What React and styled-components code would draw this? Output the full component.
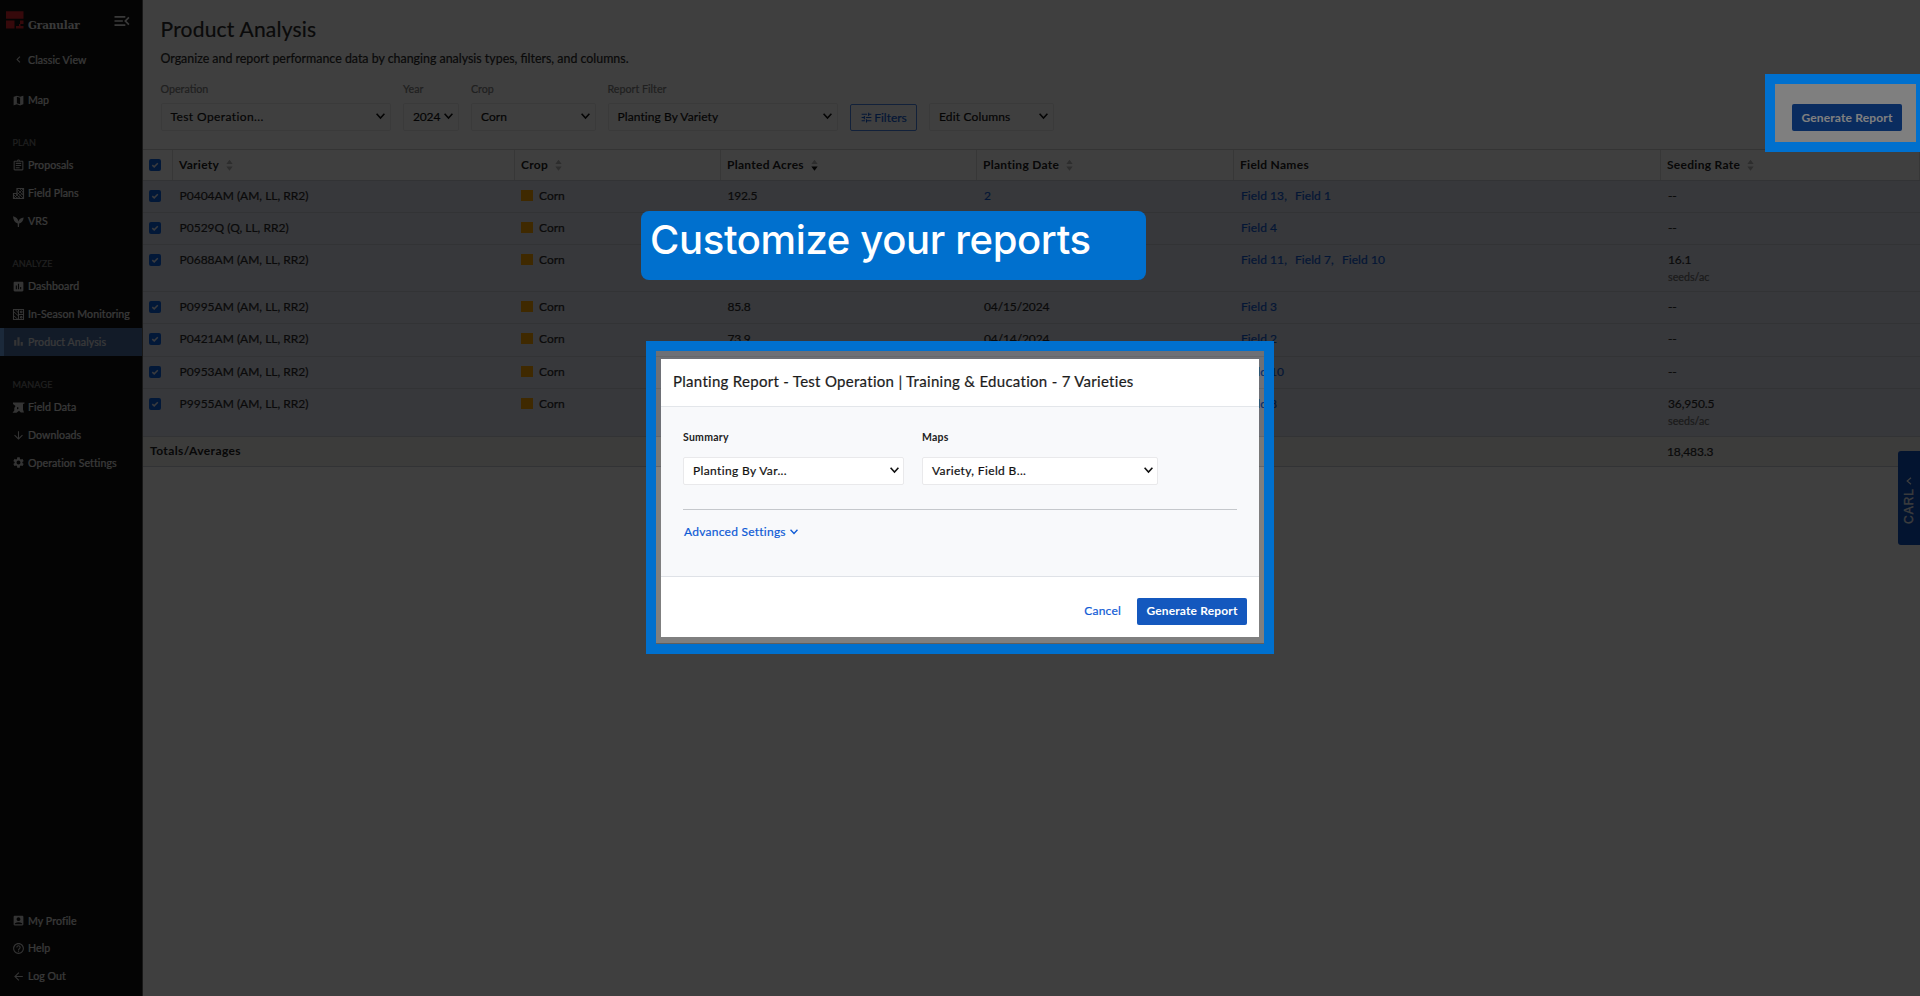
import React from 'react';
import styled, { createGlobalStyle, css } from 'styled-components';
import {
  MdMap, MdOutlineAssignment, MdPoll, MdBarChart, MdArrowDownward, MdSettings,
  MdAccountBox, MdHelpOutline, MdArrowBack, MdMenuOpen, MdChevronLeft, MdTune,
} from 'react-icons/md';

const Global = createGlobalStyle`
  * { box-sizing: border-box; }
  body { margin: 0; background: #fff; font-family: Lato, sans-serif; font-size: 12px; color: #2a2a2a; overflow: hidden; -webkit-text-stroke: 0.2px; }
`;

const Shell = styled.div`
  position: relative;
  display: flex;
  width: 1920px;
  height: 996px;
  overflow: hidden;
`;

/* ---------- sidebar ---------- */
const Sidebar = styled.nav`
  flex: none;
  display: flex;
  flex-direction: column;
  width: 143px;
  padding-bottom: 6px;
  background: #101010;
  border-right: 1px solid #606060;
  color: #e6e6e6;
`;
const Brand = styled.div`
  display: flex;
  align-items: flex-start;
  height: 46px;
  padding: 11px 10px 0 6px;
`;
const BrandName = styled.span`
  flex: 1;
  margin: 6.5px 0 0 4px;
  font: bold 11.6px/14px 'DejaVu Serif Condensed', 'DejaVu Serif', serif;
  letter-spacing: -0.1px;
  -webkit-text-stroke: 0;
`;
const GroupLabel = styled.div`
  height: 12px;
  margin: ${(p) => p.$top}px 0 ${(p) => p.$bottom}px 12.5px;
  font-size: 9.1px;
  line-height: 12px;
  letter-spacing: 0.1px;
  color: #808080;
`;
const NavItem = styled.a`
  display: flex;
  align-items: center;
  gap: 3px;
  flex: none;
  height: 27.8px;
  margin-top: ${(p) => p.$top || 0}px;
  padding-left: 12px;
  font-size: 10.6px;
  letter-spacing: 0.08px;
  white-space: nowrap;
  svg { flex: none; width: 13px; height: 13px; color: #d0d0d0; }
  ${(p) => p.$active && css`
    background: #4a6ca2;
    box-shadow: inset 4px 0 #6ea6e8;
  `}
`;
const Spacer = styled.div`
  flex: 1;
`;

/* ---------- page head ---------- */
const Main = styled.main`
  flex: 1;
  min-width: 0;
  display: flex;
  flex-direction: column;
`;
const Head = styled.header`
  height: 149px;
  padding: 15px 18px 0 17.5px;
`;
const Title = styled.h1`
  margin: 0;
  font-size: 21px;
  line-height: 28px;
  font-weight: 400;
  letter-spacing: 0.22px;
`;
const Subtitle = styled.p`
  margin: 7.5px 0 0;
  font-size: 12.4px;
  line-height: 16px;
`;
const Toolbar = styled.div`
  display: flex;
  align-items: flex-end;
  height: 50px;
  margin-top: 14.5px;
`;
const Field = styled.div`
  width: ${(p) => p.$w}px;
  margin-right: ${(p) => p.$gap}px;
`;
const FieldLabel = styled.div`
  margin-bottom: 7px;
  font-size: 10.7px;
  line-height: 14px;
  color: #808080;
`;
const SelectBox = styled.div`
  display: flex;
  align-items: center;
  justify-content: space-between;
  height: 28px;
  padding: 0 4.5px 1px 9px;
  background: #fff;
  border: 1px solid #e9e9eb;
  border-radius: 2px;
  color: #111;
  letter-spacing: ${(p) => p.$ls || 0.08}px;
  white-space: nowrap;
`;
const FilterButton = styled.button`
  display: flex;
  align-items: center;
  justify-content: center;
  gap: 1px;
  width: 67px;
  height: 27px;
  margin-right: 12px;
  padding: 0;
  background: #fff;
  border: 1px solid #4a86e8;
  border-radius: 2px;
  font: 12px Lato, sans-serif;
  color: #0f5bd6;
`;
const PrimaryButton = styled.button`
  width: 110px;
  height: 27px;
  padding: 0 0 1px;
  background: #1458be;
  border: 0;
  border-radius: 2px;
  font: 700 12px Lato, sans-serif;
  letter-spacing: 0.16px;
  color: #fff;
  -webkit-text-stroke: 0;
`;

/* ---------- table ---------- */
const Grid = styled.div`
  border-top: 1px solid #d2d2d2;
`;
const Row = styled.div`
  display: grid;
  grid-template-columns: 30px 342px 206px 256px 257px 427px 259px;
  height: ${(p) => p.$h}px;
  background: ${(p) => p.$bg};
  border-bottom: 1px solid #cbced4;
`;
const HeadCell = styled.div`
  display: flex;
  align-items: center;
  gap: 7px;
  padding: 0 0 1px 6px;
  border-right: 1px solid #dcdcdc;
  font-weight: 700;
  letter-spacing: 0.28px;
  color: #222;
  -webkit-text-stroke: 0;
`;
const Cell = styled.div`
  padding-left: ${(p) => p.$pl || 7}px;
  line-height: 29px;
  letter-spacing: ${(p) => p.$ls || 0}px;
  white-space: nowrap;
`;
const Crop = styled(Cell)`
  display: flex;
  align-items: center;
  gap: 6px;
  height: 29px;
  padding-left: 6px;
  &::before { content: ''; width: 12px; height: 11px; background: #ffa400; }
`;
const Links = styled(Cell)`
  display: flex;
  gap: 8px;
  line-height: 30px;
  letter-spacing: 0.08px;
  color: #0f5bd6;
`;
const Unit = styled.div`
  margin-top: -4px;
  font-size: 10.7px;
  line-height: 14px;
  letter-spacing: 0;
  color: #6c6c6c;
`;
const CheckCell = styled.div`
  padding: ${(p) => p.$pt}px 0 0 6px;
  border-right: ${(p) => (p.$line ? '1px solid #dcdcdc' : '0')};
  line-height: 0;
`;
const TotalLabel = styled.div`
  grid-column: 1 / 7;
  padding-left: 7px;
  line-height: 28px;
  font-weight: 700;
  letter-spacing: 0.4px;
  color: #222;
  -webkit-text-stroke: 0;
`;

/* ---------- overlays ---------- */
const Carl = styled.aside`
  position: absolute;
  right: 0;
  top: 451px;
  width: 22.5px;
  height: 94px;
  display: flex;
  flex-direction: column;
  align-items: center;
  padding-top: 26px;
  background: #0c50c0;
  border-radius: 3px 0 0 3px;
  color: #f4f4f4;
`;
const CarlText = styled.span`
  margin-top: 3px;
  writing-mode: vertical-rl;
  transform: rotate(180deg);
  font: 12px/16px 'Liberation Sans', sans-serif;
  letter-spacing: 1px;
  -webkit-text-stroke: 0.3px;
`;
const Scrim = styled.div`
  position: absolute;
  inset: 0;
  background: rgba(0, 0, 0, 0.5);
`;
const Spotlight = styled(Scrim)`
  clip-path: polygon(evenodd,
    0 0, 1920px 0, 1920px 996px, 0 996px, 0 0,
    656px 351px, 1264px 351px, 1264px 643.5px, 656px 643.5px, 656px 351px, 0 0,
    1774px 84px, 1916px 84px, 1916px 142px, 1774px 142px, 1774px 84px, 0 0);
`;
const Frame = styled.div`
  position: absolute;
  border: 10px solid #0070ce;
`;
const ActionFrame = styled(Frame)`
  left: 1764.5px;
  top: 74px;
  width: 161px;
  height: 78px;
`;
const ModalFrame = styled(Frame)`
  left: 646px;
  top: 341px;
  width: 628px;
  height: 313px;
  padding: 8px 5px 6px;
`;
const Callout = styled.div`
  position: absolute;
  left: 641px;
  top: 210.5px;
  width: 505px;
  height: 69px;
  padding: 4px 0 0 9px;
  background: #0070ce;
  border-radius: 8px;
  font: 500 40px/50px Inter, sans-serif;
  letter-spacing: -0.35px;
  color: #fff;
  white-space: nowrap;
  -webkit-text-stroke: 0;
`;
const Dialog = styled.section`
  display: flex;
  flex-direction: column;
  height: 278px;
  background: #fff;
`;
const DialogHead = styled.div`
  height: 48px;
  padding: 0 12px;
  border-bottom: 1px solid #e3e6ea;
  font-size: 15px;
  line-height: 45px;
  letter-spacing: 0.29px;
  color: #1c1c1c;
  white-space: nowrap;
`;
const DialogBody = styled.div`
  flex: 1;
  padding: 23px 22px 0;
  background: #f8f9fb;
`;
const DialogFields = styled.div`
  display: flex;
  height: 80px;
  border-bottom: 1px solid #c5c8cc;
`;
const DialogLabel = styled.div`
  margin-bottom: 13px;
  font-size: 10.5px;
  line-height: 14px;
  font-weight: 700;
  letter-spacing: 0.25px;
  color: #222;
  -webkit-text-stroke: 0;
`;
const Advanced = styled.div`
  display: flex;
  align-items: center;
  gap: 4px;
  margin: 14px 0 0 1px;
  line-height: 16px;
  letter-spacing: 0.25px;
  color: #0f5bd6;
`;
const DialogFoot = styled.div`
  display: flex;
  align-items: center;
  justify-content: flex-end;
  gap: 16px;
  height: 61px;
  padding: 8px 12px 0 0;
  border-top: 1px solid #dfe2e7;
`;
const Cancel = styled.span`
  padding-bottom: 1px;
  letter-spacing: 0.2px;
  color: #0f5bd6;
`;

/* ---------- drawings ---------- */
const Chevron = ({ w = 9, sw = 1.6 }) => (
  <svg width={w} height={w * 0.67} viewBox="0 0 9 6" fill="none" stroke="currentColor" strokeWidth={sw}>
    <path d="M.6 .8 4.5 5 8.4 .8" />
  </svg>
);
const Sort = ({ desc }) => (
  <svg width="7" height="12" viewBox="0 0 7 12">
    <path d="M.3 5 3.5 .8 6.7 5z" fill="#b4b4b4" />
    <path d="M.3 7.5 3.5 11.8 6.7 7.5z" fill={desc ? '#111' : '#b4b4b4'} />
  </svg>
);
const Check = () => (
  <svg width="12" height="12" viewBox="0 0 12 12">
    <rect width="12" height="12" rx="2" fill="#0a60e0" />
    <path d="M3.3 6.1 5.2 7.9 8.8 4.3" fill="none" stroke="#e8eef8" strokeWidth="1.5" />
  </svg>
);
const Logo = () => (
  <svg width="18" height="18" viewBox="0 0 18 18" fill="#d8242e">
    <path d="M0 .3h17.5v7.5H0zM0 9.5h8.5v8H0zM14 9.5h3.5V13H14zM10 15h7.5v2.5H10zM13 13h1.5v2.5H13z" />
  </svg>
);
const FieldPlansIcon = () => (
  <svg viewBox="0 0 13 13" fill="none" stroke="currentColor">
    <path d="M1.5 6.5H5V1.5h6.5v10h-10z" strokeWidth="1.2" />
    <path d="M2 8l3.5 3.5M4 7l4.5 4.5M5.5 5.5l5.5 5.5M5.5 2.5l5.5 5.5M8 2l3 3M2 11l9-9M5 11.500l6.500-6.500" strokeWidth=".8" />
  </svg>
);
const SproutIcon = () => (
  <svg viewBox="0 0 13 13" fill="currentColor">
    <path d="M1 1.2c3 .6 5 2.300 5.300 5.300C6.900 4.300 9 2.700 11.700 2.500 11.300 5.800 9.800 7.800 7.200 8.400L7 12H5.800L5.700 8.400C2.600 7.500 1.300 5 1 1.200z" />
  </svg>
);
const SeasonIcon = () => (
  <svg viewBox="0 0 13 13" fill="none" stroke="currentColor">
    <path d="M1.500 1.500h10v10h-10zM6.500 1v11M7 6.500h5" strokeWidth="1.100" />
    <path d="M2 4l4 3.500M2 8l4 3.500M3.500 2l3 3" strokeWidth=".9" />
    <path d="M8.500 3.200h1.500v1.500H8.500zM8.500 8.500h1.500V10H8.500z" />
  </svg>
);
const FieldDataIcon = () => (
  <svg viewBox="0 0 13 13" fill="currentColor">
    <path d="M1 1.500h11.500v1L11 3v5.500l1 3H8.800L7 9.800 4.500 11.800H.5l1.800-2.300V7L3.500 5 1 3zM5 6v2.500L7 7z" fillRule="evenodd" />
  </svg>
);

const PLAN = [['Proposals', MdOutlineAssignment], ['Field Plans', FieldPlansIcon], ['VRS', SproutIcon]];
const ANALYZE = [['Dashboard', MdPoll], ['In-Season Monitoring', SeasonIcon], ['Product Analysis', MdBarChart]];
const MANAGE = [['Field Data', FieldDataIcon], ['Downloads', MdArrowDownward], ['Operation Settings', MdSettings]];
const ACCOUNT = [['My Profile', MdAccountBox], ['Help', MdHelpOutline], ['Log Out', MdArrowBack]];

const VARIETIES = [
  { h: 32, name: 'P0404AM (AM, LL, RR2)', acres: '192.5', dates: '2', fields: ['Field 13,', 'Field 1'], rate: '--' },
  { h: 32, name: 'P0529Q (Q, LL, RR2)', fields: ['Field 4'], rate: '--' },
  { h: 47, name: 'P0688AM (AM, LL, RR2)', fields: ['Field 11,', 'Field 7,', 'Field 10'], rate: '16.1', unit: true },
  { h: 32, name: 'P0995AM (AM, LL, RR2)', acres: '85.8', date: '04/15/2024', fields: ['Field 3'], rate: '--' },
  { h: 33, name: 'P0421AM (AM, LL, RR2)', acres: '73.9', date: '04/14/2024', fields: ['Field 2'], rate: '--' },
  { h: 32, name: 'P0953AM (AM, LL, RR2)', fields: ['Field 10'], rate: '--' },
  { h: 48, name: 'P9955AM (AM, LL, RR2)', fields: ['Field 8'], rate: '36,950.5', unit: true },
];

const NavGroup = ({ items, active }) => items.map(([label, Icon]) => (
  <NavItem key={label} $active={label === active}><Icon />{label}</NavItem>
));

const Select = ({ children, ...rest }) => (
  <SelectBox {...rest}>{children}<Chevron /></SelectBox>
);

export default function App() {
  return (
    <Shell>
      <Global />
      <Sidebar>
        <Brand>
          <Logo />
          <BrandName>Granular</BrandName>
          <MdMenuOpen size={20} />
        </Brand>
        <NavItem><MdChevronLeft />Classic View</NavItem>
        <NavItem $top={12.5}><MdMap />Map</NavItem>
        <GroupLabel $top={23} $bottom={2.5}>PLAN</GroupLabel>
        <NavGroup items={PLAN} />
        <GroupLabel $top={23} $bottom={2.5}>ANALYZE</GroupLabel>
        <NavGroup items={ANALYZE} active="Product Analysis" />
        <GroupLabel $top={23} $bottom={2.5}>MANAGE</GroupLabel>
        <NavGroup items={MANAGE} />
        <Spacer />
        <NavGroup items={ACCOUNT} />
      </Sidebar>

      <Main>
        <Head>
          <Title>Product Analysis</Title>
          <Subtitle>Organize and report performance data by changing analysis types, filters, and columns.</Subtitle>
          <Toolbar>
            <Field $w={230} $gap={12.5}>
              <FieldLabel>Operation</FieldLabel>
              <Select $ls={0.4}>Test Operation...</Select>
            </Field>
            <Field $w={55.5} $gap={12.5}>
              <FieldLabel>Year</FieldLabel>
              <Select $ls={-0.15}>2024</Select>
            </Field>
            <Field $w={124.5} $gap={12}>
              <FieldLabel>Crop</FieldLabel>
              <Select>Corn</Select>
            </Field>
            <Field $w={230} $gap={12.5}>
              <FieldLabel>Report Filter</FieldLabel>
              <Select>Planting By Variety</Select>
            </Field>
            <FilterButton><MdTune size={13} />Filters</FilterButton>
            <Field $w={124.5} $gap={0}>
              <Select $ls={0.15}>Edit Columns</Select>
            </Field>
            <Spacer />
            <PrimaryButton>Generate Report</PrimaryButton>
          </Toolbar>
        </Head>

        <Grid>
          <Row $h={31} $bg="#fff">
            <CheckCell $pt={9} $line><Check /></CheckCell>
            <HeadCell>Variety<Sort /></HeadCell>
            <HeadCell>Crop<Sort /></HeadCell>
            <HeadCell>Planted Acres<Sort desc /></HeadCell>
            <HeadCell>Planting Date<Sort /></HeadCell>
            <HeadCell>Field Names</HeadCell>
            <HeadCell>Seeding Rate<Sort /></HeadCell>
          </Row>
          {VARIETIES.map((v) => (
            <Row key={v.name} $h={v.h} $bg="#dde0ec">
              <CheckCell $pt={9}><Check /></CheckCell>
              <Cell $pl={6.5}>{v.name}</Cell>
              <Crop>Corn</Crop>
              <Cell $pl={6.5} $ls={-0.2}>{v.acres}</Cell>
              {v.dates ? <Links>{v.dates}</Links> : <Cell $ls={-0.12}>{v.date}</Cell>}
              <Links>{v.fields.map((f) => <span key={f}>{f}</span>)}</Links>
              <Cell $ls={-0.12}>{v.rate}{v.unit && <Unit>seeds/ac</Unit>}</Cell>
            </Row>
          ))}
          <Row $h={30} $bg="#f0f0ee">
            <TotalLabel>Totals/Averages</TotalLabel>
            <Cell $pl={6} $ls={-0.12}>18,483.3</Cell>
          </Row>
        </Grid>
      </Main>

      <Carl>
        <svg width="6" height="8" viewBox="0 0 6 8" fill="none" stroke="currentColor" strokeWidth="1.2"><path d="M5 .8 1.200 4 5 7.200" /></svg>
        <CarlText>CARL</CarlText>
      </Carl>

      <Scrim />
      <Spotlight />
      <ActionFrame />
      <Callout>Customize your reports</Callout>
      <ModalFrame>
        <Dialog>
          <DialogHead>Planting Report - Test Operation | Training &amp; Education - 7 Varieties</DialogHead>
          <DialogBody>
            <DialogFields>
              <Field $w={221} $gap={18}>
                <DialogLabel>Summary</DialogLabel>
                <Select $ls={0.36}>Planting By Var...</Select>
              </Field>
              <Field $w={236} $gap={0}>
                <DialogLabel>Maps</DialogLabel>
                <Select $ls={0.36}>Variety, Field B...</Select>
              </Field>
            </DialogFields>
            <Advanced>Advanced Settings<Chevron w={8} sw={1.5} /></Advanced>
          </DialogBody>
          <DialogFoot>
            <Cancel>Cancel</Cancel>
            <PrimaryButton>Generate Report</PrimaryButton>
          </DialogFoot>
        </Dialog>
      </ModalFrame>
    </Shell>
  );
}
